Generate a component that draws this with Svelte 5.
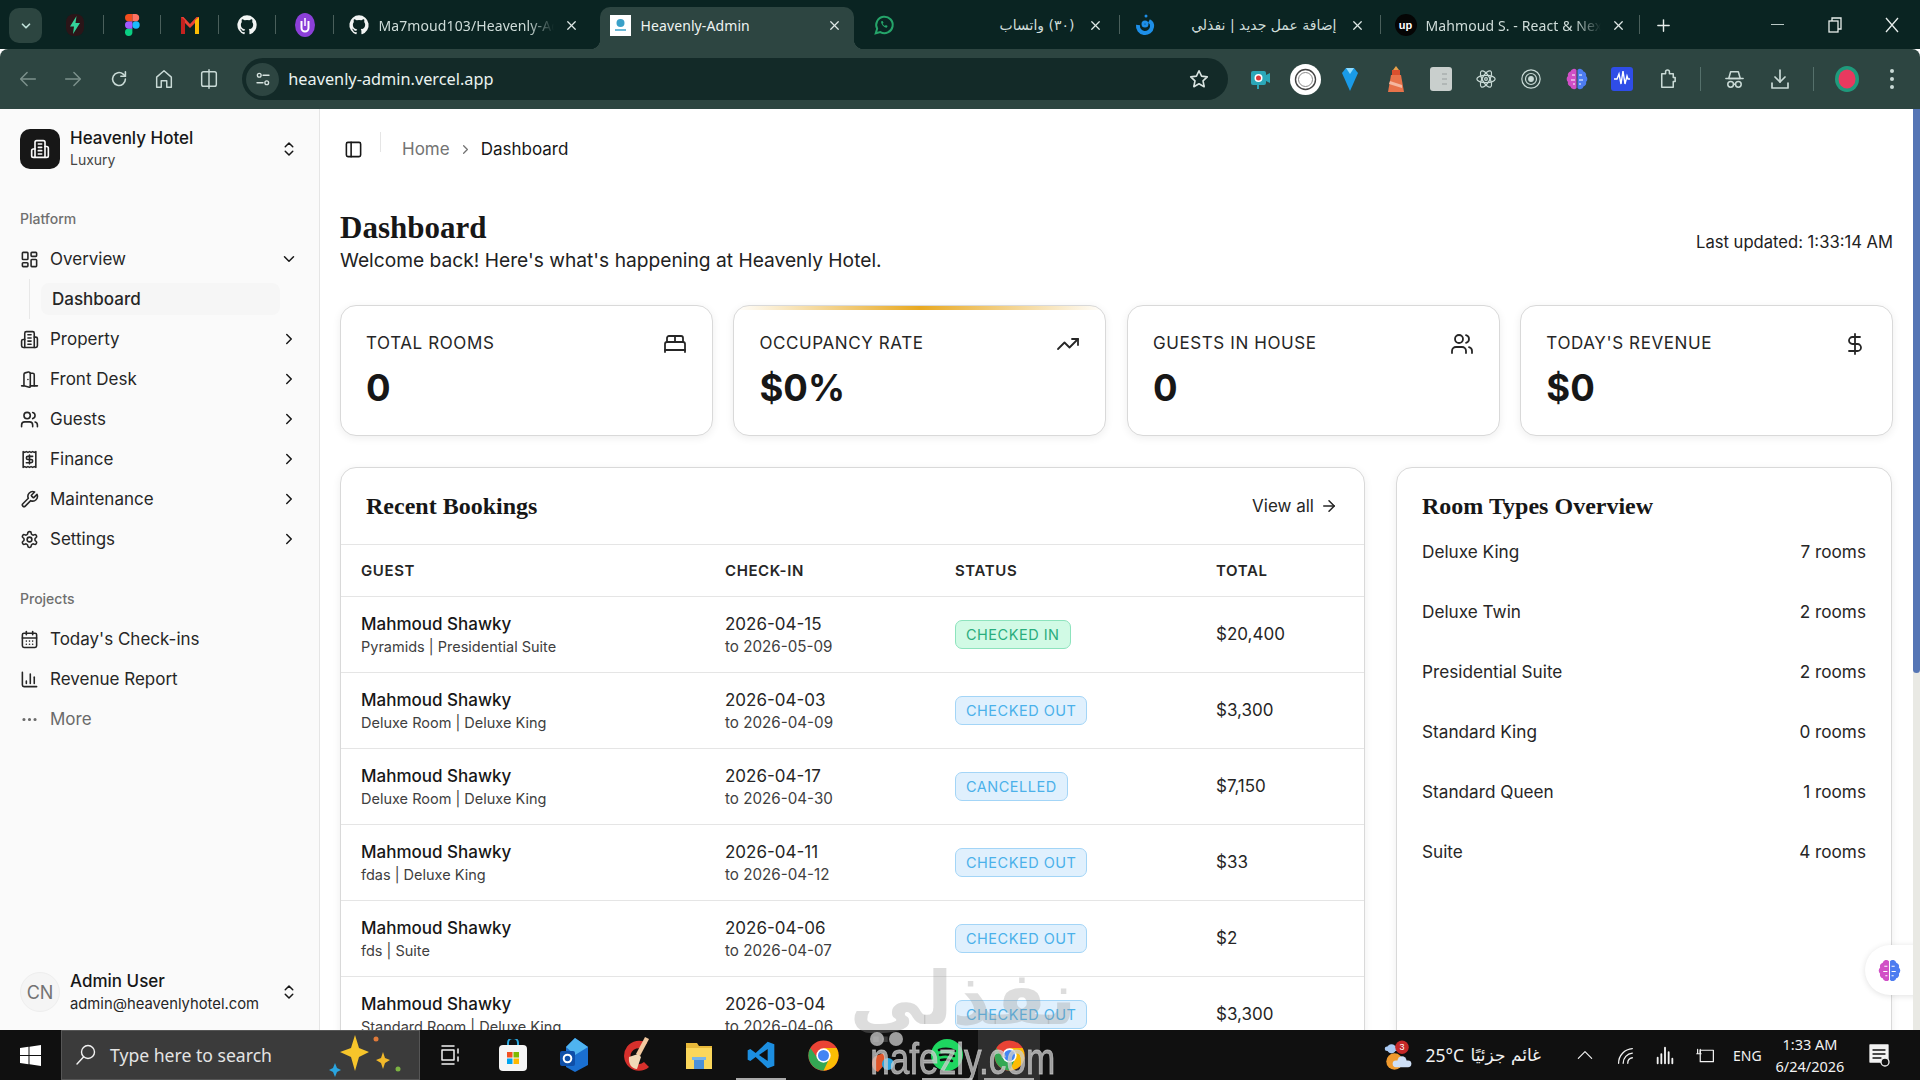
<script>
  const ic = {
    dash: '<rect width="7" height="9" x="3" y="3" rx="1"/><rect width="7" height="5" x="14" y="3" rx="1"/><rect width="7" height="9" x="14" y="12" rx="1"/><rect width="7" height="5" x="3" y="16" rx="1"/>',
    building: '<path d="M6 22V4a2 2 0 0 1 2-2h8a2 2 0 0 1 2 2v18Z"/><path d="M6 12H4a2 2 0 0 0-2 2v6a2 2 0 0 0 2 2h2"/><path d="M18 9h2a2 2 0 0 1 2 2v9a2 2 0 0 1-2 2h-2"/><path d="M10 6h4"/><path d="M10 10h4"/><path d="M10 14h4"/><path d="M10 18h4"/>',
    door: '<path d="M13 4h3a2 2 0 0 1 2 2v14"/><path d="M2 20h3"/><path d="M13 20h9"/><path d="M10 12v.01"/><path d="M13 4.562v16.157a1 1 0 0 1-1.242.97L5 20V5.562a2 2 0 0 1 1.515-1.94l4-1A2 2 0 0 1 13 4.561Z"/>',
    users: '<path d="M16 21v-2a4 4 0 0 0-4-4H6a4 4 0 0 0-4 4v2"/><circle cx="9" cy="7" r="4"/><path d="M22 21v-2a4 4 0 0 0-3-3.87"/><path d="M16 3.13a4 4 0 0 1 0 7.75"/>',
    receipt: '<path d="M4 2v20l2-1 2 1 2-1 2 1 2-1 2 1 2-1 2 1V2l-2 1-2-1-2 1-2-1-2 1-2-1-2 1Z"/><path d="M16 8h-6a2 2 0 1 0 0 4h4a2 2 0 1 1 0 4H8"/><path d="M12 17.5v-11"/>',
    wrench: '<path d="M14.7 6.3a1 1 0 0 0 0 1.4l1.6 1.6a1 1 0 0 0 1.4 0l3.77-3.77a6 6 0 0 1-7.94 7.94l-6.91 6.91a2.12 2.12 0 0 1-3-3l6.91-6.91a6 6 0 0 1 7.94-7.94l-3.76 3.76z"/>',
    gear: '<path d="M12.22 2h-.44a2 2 0 0 0-2 2v.18a2 2 0 0 1-1 1.73l-.43.25a2 2 0 0 1-2 0l-.15-.08a2 2 0 0 0-2.73.73l-.22.38a2 2 0 0 0 .73 2.73l.15.1a2 2 0 0 1 1 1.72v.51a2 2 0 0 1-1 1.74l-.15.09a2 2 0 0 0-.73 2.73l.22.38a2 2 0 0 0 2.73.73l.15-.08a2 2 0 0 1 2 0l.43.25a2 2 0 0 1 1 1.73V20a2 2 0 0 0 2 2h.44a2 2 0 0 0 2-2v-.18a2 2 0 0 1 1-1.73l.43-.25a2 2 0 0 1 2 0l.15.08a2 2 0 0 0 2.73-.73l.22-.39a2 2 0 0 0-.73-2.73l-.15-.08a2 2 0 0 1-1-1.74v-.5a2 2 0 0 1 1-1.74l.15-.09a2 2 0 0 0 .73-2.73l-.22-.38a2 2 0 0 0-2.73-.73l-.15.08a2 2 0 0 1-2 0l-.43-.25a2 2 0 0 1-1-1.73V4a2 2 0 0 0-2-2z"/><circle cx="12" cy="12" r="3"/>',
    cal: '<path d="M8 2v4"/><path d="M16 2v4"/><rect width="18" height="18" x="3" y="4" rx="2"/><path d="M3 10h18"/><path d="M8 14h.01"/><path d="M12 14h.01"/><path d="M16 14h.01"/><path d="M8 18h.01"/><path d="M12 18h.01"/><path d="M16 18h.01"/>',
    chart: '<path d="M3 3v16a2 2 0 0 0 2 2h16"/><path d="M18 17V9"/><path d="M13 17V5"/><path d="M8 17v-3"/>',
    dots: '<circle cx="12" cy="12" r="1"/><circle cx="19" cy="12" r="1"/><circle cx="5" cy="12" r="1"/>',
    bed: '<path d="M2 20v-8a2 2 0 0 1 2-2h16a2 2 0 0 1 2 2v8"/><path d="M4 10V6a2 2 0 0 1 2-2h12a2 2 0 0 1 2 2v4"/><path d="M12 4v6"/><path d="M2 18h20"/>',
    trend: '<polyline points="22 7 13.5 15.5 8.5 10.5 2 17"/><polyline points="16 7 22 7 22 13"/>',
    dollar: '<line x1="12" x2="12" y1="2" y2="22"/><path d="M17 5H9.5a3.5 3.5 0 0 0 0 7h5a3.5 3.5 0 0 1 0 7H6"/>',
    panel: '<rect width="18" height="18" x="3" y="3" rx="2"/><path d="M9 3v18"/>',
    updown: '<path d="m7 15 5 5 5-5"/><path d="m7 9 5-5 5 5"/>',
    right: '<path d="m9 18 6-6-6-6"/>',
    down: '<path d="m6 9 6 6 6-6"/>',
    arrow: '<path d="M5 12h14"/><path d="m12 5 7 7-7 7"/>',
    back: '<path d="M20 12H5"/><path d="m11 5-7 7 7 7"/>',
    fwd: '<path d="M4 12h15"/><path d="m13 5 7 7-7 7"/>',
    reload: '<path d="M19 12a7 7 0 1 1-2.4-5.3L19 9"/><path d="M19 4v5h-5"/>',
    home: '<path d="M4 21V10l8-7 8 7v11h-5v-7H9v7z"/>',
    split: '<rect x="4" y="4" width="16" height="16" rx="2"/><path d="M12 2v20"/>',
    star: '<path d="m12 3 2.8 5.9 6.2.8-4.6 4.3 1.2 6.4L12 17.2l-5.6 3.2 1.2-6.4L3 9.700l6.200-.8z"/>',
    puzzle: '<path d="M6 6h4V4a2 2 0 0 1 4 0v2h4v4h2v4h-2v6H6z"/>',
    incog: '<path d="M8 4h8l2 7H6z"/><path d="M3 11h18"/><circle cx="8" cy="17" r="3"/><circle cx="16" cy="17" r="3"/><path d="M11 17h2"/>',
    dl: '<path d="M12 3v12"/><path d="m7 10 5 5 5-5"/><path d="M4 16v5h16v-5"/>',
    close: '<path d="M6 6l12 12"/><path d="M18 6 6 18"/>',
    plus: '<path d="M12 4v16"/><path d="M4 12h16"/>',
    caret: '<path d="m4 16 8-8 8 8"/>',
    search: '<circle cx="14" cy="9" r="6.500"/><path d="M9.500 14 3 21"/>',
    atom: '<circle cx="12" cy="12" r="1.500"/><ellipse cx="12" cy="12" rx="10" ry="4"/><ellipse cx="12" cy="12" rx="10" ry="4" transform="rotate(60 12 12)"/><ellipse cx="12" cy="12" rx="10" ry="4" transform="rotate(120 12 12)"/>',
    rings: '<circle cx="12" cy="12" r="10"/><circle cx="12" cy="12" r="6"/><circle cx="12" cy="12" r="2.500" fill="currentColor"/>',
    tune: '<circle cx="7" cy="7" r="2.500"/><path d="M12 7h8"/><circle cx="17" cy="17" r="2.500"/><path d="M4 17h8"/>',
    bars: '<path d="M4 21v-6M8 21V11M12 21V4M16 21V9M20 21v-5"/>',
    wifi: '<path d="M5 21A16 16 0 0 1 20 5"/><path d="M10 21a11 11 0 0 1 10-11"/><path d="M15 21a6 6 0 0 1 5-6"/>',
    batt: '<rect x="6" y="6" width="15" height="13"/><path d="M3 5v5M6 5v5M2 10h5"/>',
    note: '<path d="M3 2h18v17H3z" fill="currentColor"/><path d="M6 7h12M6 11h12M6 15h8" stroke="#101010"/><circle cx="18" cy="19" r="4" fill="#101010"/>',
    taskview: '<path d="M4 3h12M4 21h12"/><rect x="4" y="7" width="12" height="10"/><path d="M20 6v4M20 14v4"/>'
  };

  const tabs = [
    { w: 266, pl: 14, pr: 16, title: 'Ma7moud103/Heavenly-Admin', icon: 'gh', fade: true },
    { w: 254, pl: 10, pr: 7, title: 'Heavenly-Admin', icon: 'fav', active: true },
    { w: 266, pl: 19, pr: 12, title: '(٣٠) واتساب', icon: 'wa', rtl: true, sep: true },
    { w: 261, pl: 14, pr: 11, title: 'إضافة عمل جديد | نفذلي', icon: 'nf', rtl: true, sep: true },
    { w: 259, pl: 14, pr: 9, title: 'Mahmoud S. - React & Next.js', icon: 'up', fade: true, sep: true }
  ];

  const platform = [
    { l: 'Overview', i: 'dash', open: true },
    { l: 'Property', i: 'building' },
    { l: 'Front Desk', i: 'door' },
    { l: 'Guests', i: 'users' },
    { l: 'Finance', i: 'receipt' },
    { l: 'Maintenance', i: 'wrench' },
    { l: 'Settings', i: 'gear' }
  ];

  const stats = [
    { l: 'Total Rooms', v: '0', i: 'bed' },
    { l: 'Occupancy Rate', v: '$0%', i: 'trend', accent: true },
    { l: 'Guests in House', v: '0', i: 'users' },
    { l: "Today's Revenue", v: '$0', i: 'dollar' }
  ];

  const rows = [
    { sub: 'Pyramids | Presidential Suite', a: '2026-04-15', b: '2026-05-09', s: 'Checked In', c: 'green', t: '$20,400' },
    { sub: 'Deluxe Room | Deluxe King', a: '2026-04-03', b: '2026-04-09', s: 'Checked Out', c: 'blue', t: '$3,300' },
    { sub: 'Deluxe Room | Deluxe King', a: '2026-04-17', b: '2026-04-30', s: 'Cancelled', c: 'blue', t: '$7,150' },
    { sub: 'fdas | Deluxe King', a: '2026-04-11', b: '2026-04-12', s: 'Checked Out', c: 'blue', t: '$33' },
    { sub: 'fds | Suite', a: '2026-04-06', b: '2026-04-07', s: 'Checked Out', c: 'blue', t: '$2' },
    { sub: 'Standard Room | Deluxe King', a: '2026-03-04', b: '2026-04-06', s: 'Checked Out', c: 'blue', t: '$3,300' }
  ];

  const roomTypes = [
    ['Deluxe King', '7 rooms'], ['Deluxe Twin', '2 rooms'], ['Presidential Suite', '2 rooms'],
    ['Standard King', '0 rooms'], ['Standard Queen', '1 rooms'], ['Suite', '4 rooms']
  ];
</script>

{#snippet i(name, size = 18, sw = 2)}
  <svg class="i" width={size} height={size} viewBox="0 0 24 24" fill="none" stroke="currentColor" stroke-width={sw} stroke-linecap="round" stroke-linejoin="round">{@html ic[name]}</svg>
{/snippet}

{#snippet github(size)}
  <svg width={size} height={size} viewBox="0 0 24 24" fill="#f2f5f4"><path d="M12 1.500a10.500 10.500 0 0 0-3.300 20.470c.52.100.72-.230.720-.500v-1.800c-2.920.630-3.540-1.410-3.540-1.410-.480-1.210-1.170-1.540-1.170-1.540-.950-.650.070-.640.070-.640 1.050.070 1.600 1.080 1.600 1.080.940 1.600 2.450 1.140 3.050.870.100-.680.370-1.140.670-1.400-2.330-.260-4.780-1.160-4.780-5.180 0-1.140.410-2.080 1.080-2.810-.110-.270-.470-1.340.100-2.780 0 0 .880-.280 2.890 1.070a10 10 0 0 1 5.260 0c2-1.350 2.880-1.070 2.880-1.070.570 1.440.210 2.510.100 2.780.670.730 1.080 1.670 1.080 2.810 0 4.030-2.460 4.920-4.800 5.170.380.330.710.970.710 1.950v2.890c0 .280.190.610.720.500A10.500 10.500 0 0 0 12 1.500z"/></svg>
{/snippet}

{#snippet chrome(size)}
  <svg width={size} height={size} viewBox="0 0 24 24"><circle cx="12" cy="12" r="11" fill="#ea4335"/><path d="M2.500 6.500A11 11 0 0 0 12 23l5-8.500H8z" fill="#34a853"/><path d="M12 23a11 11 0 0 0 9.500-16.500H12l4 8z" fill="#fbbc04"/><circle cx="12" cy="12" r="5.200" fill="#fff"/><circle cx="12" cy="12" r="4" fill="#4285f4"/></svg>
{/snippet}

{#snippet brain(size)}
  <svg width={size} height={size} viewBox="0 0 24 24"><path d="M11.500 3a3.500 3.500 0 0 0-6 1.500A3.500 3.500 0 0 0 3 9a4 4 0 0 0 0 6 3.500 3.500 0 0 0 2.500 4.500 3.500 3.500 0 0 0 6 1.500z" fill="#d14fc6"/><path d="M12.500 3a3.500 3.500 0 0 1 6 1.500A3.500 3.500 0 0 1 21 9a4 4 0 0 1 0 6 3.500 3.500 0 0 1-2.500 4.500 3.500 3.500 0 0 1-6 1.500z" fill="#4d7cf0"/><path d="M7 8h3M6 13h4M8 17h2M14 8h3M14 13h4M14 17h2" stroke="#fff" stroke-width="1"/></svg>
{/snippet}

<div class="screen">
  <header class="tabstrip">
    <button class="tabsearch">{@render i('down', 14, 3)}</button>
    <div class="pinned">
      <span class="pin"><svg width="20" height="24" viewBox="0 0 20 24"><rect x="1" y="1" width="18" height="22" rx="8" fill="#2a1518"/><path d="M11.500 3 5 13.500h4L8 21l7-11h-4.500z" fill="#34d399"/></svg></span>
      <span class="pin"><svg width="15" height="22" viewBox="0 0 15 22"><circle cx="11" cy="11" r="3.700" fill="#1abcfe"/><path d="M3.700 22a3.700 3.700 0 0 0 3.700-3.700v-3.700H3.700a3.700 3.700 0 0 0 0 7.400z" fill="#0acf83"/><path d="M0 11a3.700 3.700 0 0 1 3.700-3.700h3.700v7.400H3.700A3.700 3.700 0 0 1 0 11z" fill="#a259ff"/><path d="M0 3.700A3.700 3.700 0 0 1 3.700 0h3.700v7.300H3.700A3.700 3.700 0 0 1 0 3.700z" fill="#f24e1e"/><path d="M7.400 0h3.700a3.700 3.700 0 0 1 0 7.300H7.400z" fill="#ff7262"/></svg></span>
      <span class="pin"><svg width="22" height="22" viewBox="0 0 22 22"><path d="M2 20V3h2.500L11 10l6.500-7H20v17h-4V9l-5 5-5-5v11z" fill="#ea4335"/><path d="M2 20V3l4 3.500V20z" fill="#c5221f"/><path d="M16 20V6.500L20 3v17z" fill="#fbbc04"/></svg></span>
      <span class="pin">{@render github(22)}</span>
      <span class="pin"><svg width="20" height="24" viewBox="0 0 20 24"><ellipse cx="10" cy="12" rx="10" ry="12" fill="#8b3fd9"/><path d="M6.500 8v7a3.500 3.500 0 0 0 7 0V8" fill="none" stroke="#fff" stroke-width="2"/><path d="M10 5v8" stroke="#fff" stroke-width="1.500"/></svg></span>
    </div>
    {#each tabs as t}
      <div class="tab" class:active={t.active} class:sep={t.sep} style="width:{t.w}px;padding-left:{t.pl}px;padding-right:{t.pr}px">
        <span class="favicon">
          {#if t.icon === 'gh'}{@render github(22)}
          {:else if t.icon === 'fav'}<svg width="21" height="21" viewBox="0 0 21 21"><rect width="21" height="21" fill="#fff"/><circle cx="10.500" cy="8" r="4" fill="#3aa0c8"/><path d="M5 15h11" stroke="#3aa0c8" stroke-width="1.500"/></svg>
          {:else if t.icon === 'wa'}<svg width="22" height="22" viewBox="0 0 24 24" fill="none" stroke="#25a56a" stroke-width="2.200"><path d="M3 21l1.500-5A9 9 0 1 1 8 19.700z"/><path d="M9 8c-1 2 2.500 7 6 7l1-2-2-1-1 1c-1-.500-2-1.500-2.500-2.500l1-1-1-2z" fill="#25a56a" stroke="none"/></svg>
          {:else if t.icon === 'nf'}<svg width="22" height="24" viewBox="0 0 22 24" fill="none" stroke="#1d8fe8" stroke-width="4"><path d="M4 12a7 7 0 0 0 14 2c.500-3-1-5-3-6"/><circle cx="11" cy="11" r="1.500"/><circle cx="12" cy="3" r="1.500" fill="#1d8fe8" stroke="none"/></svg>
          {:else}<span class="upfav">up</span>{/if}
        </span>
        <span class="ttl" class:rtl={t.rtl} class:fade={t.fade}>{t.title}</span>
        <span class="x">{@render i('close', 15, 2)}</span>
      </div>
    {/each}
    <span class="newtab">{@render i('plus', 17, 2)}</span>
    <div class="winctl">
      <span class="wmin"></span>
      <span class="wres"><svg width="14" height="16" viewBox="0 0 14 16" fill="none" stroke="#e8eeec" stroke-width="1.300"><rect x="1" y="4" width="9" height="11"/><path d="M4 4V1h9v11h-3"/></svg></span>
      <span class="wclose"><svg width="16" height="16" viewBox="0 0 16 16" fill="none" stroke="#e8eeec" stroke-width="1.300"><path d="M2 1l12 14M14 1 2 15"/></svg></span>
    </div>
  </header>

  <div class="toolbar">
    <span class="tb dim">{@render i('back', 22, 1.600)}</span>
    <span class="tb dim">{@render i('fwd', 22, 1.600)}</span>
    <span class="tb">{@render i('reload', 22, 1.700)}</span>
    <span class="tb">{@render i('home', 22, 1.600)}</span>
    <span class="tb">{@render i('split', 22, 1.600)}</span>
    <div class="omni">
      <span class="tune">{@render i('tune', 18, 1.800)}</span>
      <span class="url">heavenly-admin.vercel.app</span>
      <span class="omnistar">{@render i('star', 22, 1.800)}</span>
    </div>
    <div class="exts">
      <span class="ext"><svg width="20" height="24" viewBox="0 0 20 24"><rect x="1" y="4" width="15" height="14" rx="2" fill="#2ba7b8"/><path d="M16 8l4-2v10l-4-2z" fill="#2ba7b8"/><circle cx="8.500" cy="11" r="4" fill="#fff"/><circle cx="8.500" cy="11" r="2.500" fill="#d93a3a"/><path d="M8 18v4" stroke="#2ba7b8" stroke-width="2"/></svg></span>
      <span class="ext"><svg width="31" height="31" viewBox="0 0 31 31" fill="none"><circle cx="15.500" cy="15.500" r="15.500" fill="#fff"/><circle cx="15.500" cy="15.500" r="10" stroke="#444" stroke-width="1.400"/><circle cx="15.500" cy="15.500" r="7" stroke="#888"/></svg></span>
      <span class="ext"><svg width="16" height="24" viewBox="0 0 16 24"><path d="M0 6 4 1h8l4 5-8 18z" fill="#1a9be8"/><path d="M4 1h8l-4 6z" fill="#8fdcff"/></svg></span>
      <span class="ext"><svg width="16" height="26" viewBox="0 0 16 26"><path d="M3 9h10l3 17H0z" fill="#e8734a"/><path d="M4 4h8v5H4z" fill="#d9502e"/><path d="M8 0l3 4H5z" fill="#e8a04a"/><path d="M2 15l12 4v3L1 18z" fill="#f5b79f"/></svg></span>
      <span class="ext"><svg width="22" height="24" viewBox="0 0 22 24"><rect width="22" height="24" rx="3" fill="#c9cfcd"/><path d="M12 7h5M12 12h5M12 17h5" stroke="#a9b0ae" stroke-width="1.300"/></svg></span>
      <span class="ext light">{@render i('atom', 22, 1.300)}</span>
      <span class="ext light">{@render i('rings', 22, 1.300)}</span>
      <span class="ext">{@render brain(24)}</span>
      <span class="ext"><svg width="22" height="24" viewBox="0 0 22 24"><rect width="22" height="24" rx="3" fill="#2f4de8"/><path d="M3 12h3l2-5 2 10 2-13 2 13 2-8 1 3h2" fill="none" stroke="#fff" stroke-width="1.400"/></svg></span>
      <span class="ext light">{@render i('puzzle', 23, 1.600)}</span>
      <span class="tsep"></span>
      <span class="ext light">{@render i('incog', 23, 1.600)}</span>
      <span class="ext light">{@render i('dl', 24, 1.700)}</span>
      <span class="tsep"></span>
      <span class="ext"><svg width="24" height="26" viewBox="0 0 24 26"><ellipse cx="12" cy="13" rx="12" ry="13" fill="#1f9a7c"/><ellipse cx="12" cy="13" rx="8.500" ry="9.500" fill="#e9395f"/></svg></span>
      <span class="ext kebab"><i></i><i></i><i></i></span>
    </div>
  </div>

  <div class="page">
    <aside class="side">
      <div class="brandrow">
        <span class="logo">{@render i('building', 20, 2)}</span>
        <div class="brandtext up2"><strong>Heavenly Hotel</strong><small>Luxury</small></div>
        <span class="chev">{@render i('updown', 18, 2)}</span>
      </div>

      <div class="grouplabel first">Platform</div>
      {#each platform as n}
        <div class="nav">
          <span class="nicon">{@render i(n.i, 19, 2)}</span>
          <span class="nlabel">{n.l}</span>
          <span class="chev">{@render i(n.open ? 'down' : 'right', 18, 2)}</span>
        </div>
        {#if n.open}
          <div class="subwrap"><div class="subitem">Dashboard</div></div>
        {/if}
      {/each}

      <div class="grouplabel">Projects</div>
      <div class="nav"><span class="nicon">{@render i('cal', 19, 2)}</span><span class="nlabel">Today's Check-ins</span></div>
      <div class="nav"><span class="nicon">{@render i('chart', 19, 2)}</span><span class="nlabel">Revenue Report</span></div>
      <div class="nav more"><span class="nicon">{@render i('dots', 19, 2)}</span><span class="nlabel">More</span></div>

      <div class="userrow">
        <span class="avatar">CN</span>
        <div class="brandtext"><strong>Admin User</strong><small class="dark">admin@heavenlyhotel.com</small></div>
        <span class="chev">{@render i('updown', 18, 2)}</span>
      </div>
    </aside>

    <main class="main">
      <div class="crumbs">
        <span class="trigger">{@render i('panel', 19, 2)}</span>
        <span class="vsep"></span>
        <span class="home">Home</span>
        <span class="crchev">{@render i('right', 15, 2)}</span>
        <span class="cur">Dashboard</span>
      </div>

      <div class="heading">
        <div>
          <h1>Dashboard</h1>
          <p>Welcome back! Here's what's happening at Heavenly Hotel.</p>
        </div>
        <span class="updated">Last updated: 1:33:14 AM</span>
      </div>

      <section class="stats">
        {#each stats as s}
          <article class="stat" class:accent={s.accent}>
            <div class="stattop"><span class="statlabel">{s.l}</span><span class="staticon">{@render i(s.i, 24, 1.800)}</span></div>
            <div class="statval">{s.v}</div>
          </article>
        {/each}
      </section>

      <section class="lower">
        <div class="card bookings">
          <div class="bhead">
            <h2>Recent Bookings</h2>
            <span class="viewall">View all {@render i('arrow', 18, 2)}</span>
          </div>
          <table>
            <colgroup><col class="c1" /><col class="c2" /><col class="c3" /><col /></colgroup>
            <thead><tr><th>Guest</th><th>Check-in</th><th>Status</th><th>Total</th></tr></thead>
            <tbody>
              {#each rows as r}
                <tr>
                  <td><div class="l1">Mahmoud Shawky</div><div class="l2">{r.sub}</div></td>
                  <td><div class="l1 light">{r.a}</div><div class="l2 date">to {r.b}</div></td>
                  <td><span class="badge {r.c}">{r.s}</span></td>
                  <td class="total">{r.t}</td>
                </tr>
              {/each}
            </tbody>
          </table>
        </div>

        <div class="card roomcard">
          <h2>Room Types Overview</h2>
          <div class="rtlist">
            {#each roomTypes as rt}
              <div class="rt"><span>{rt[0]}</span><span>{rt[1]}</span></div>
            {/each}
          </div>
        </div>
      </section>

      <button class="float">{@render brain(25)}</button>
    </main>
    <div class="scrollbar"><div class="thumb"></div></div>
  </div>

  <footer class="taskbar">
    <span class="winlogo"><svg width="21" height="21" viewBox="0 0 21 21" fill="#fff"><path d="M0 3l8.500-1.200V10H0zM9.500 1.700 21 0v10H9.500zM0 11h8.500v8.200L0 18zM9.500 11H21v10L9.500 19.300z"/></svg></span>
    <div class="tsearch">
      <span class="tsi">{@render i('search', 24, 1.400)}</span>
      <span class="tst">Type here to search</span>
      <svg class="spark" width="74" height="44" viewBox="0 0 74 44"><path d="M27 2l4 13 10 4-10 5-4 14-4-14-11-5 11-4z" fill="#f7c52b"/><path d="M55 19l2 6 5 2-5 3-2 6-2-6-5-3 5-2z" fill="#f2b92a"/><circle cx="48" cy="6" r="2.500" fill="#e07a3a"/><circle cx="70" cy="36" r="2.500" fill="#7cb342"/><path d="M7 30l2 5 4 2-4 2-2 5-2-5-4-2 4-2z" fill="#2aa5e0"/></svg>
    </div>
    <span class="taskview">{@render i('taskview', 24, 1.500)}</span>
    <div class="apps">
      <span class="app"><svg width="28" height="32" viewBox="0 0 28 32"><path d="M9 7V4a5 5 0 0 1 10 0v3" fill="none" stroke="#29a8e0" stroke-width="2"/><rect y="6" width="28" height="26" rx="4" fill="#f5f5f5"/><rect x="8" y="13" width="5.500" height="5.500" fill="#f25022"/><rect x="14.500" y="13" width="5.500" height="5.500" fill="#7fba00"/><rect x="8" y="19.500" width="5.500" height="5.500" fill="#00a4ef"/><rect x="14.500" y="19.500" width="5.500" height="5.500" fill="#ffb900"/></svg></span>
      <span class="app"><svg width="30" height="34" viewBox="0 0 30 34"><path d="M15 0l13 9v18l-13 7-9-5V9z" fill="#1a6fd0"/><path d="M15 0l13 9-13 8-9-8z" fill="#4fb4f0"/><rect x="0" y="13" width="15" height="15" rx="2" fill="#0f4fa8"/><circle cx="7.500" cy="20.500" r="3.800" fill="none" stroke="#fff" stroke-width="2"/></svg></span>
      <span class="app"><svg width="32" height="36" viewBox="0 0 32 36"><path d="M26 6A15 15 0 1 0 28 30l-5-5a8 8 0 1 1-2-13z" fill="#d6302c"/><path d="M24 0l4 2-9 17-4-2z" fill="#f2c9a0"/><path d="M8 20l9-3 3 3-4 12c-5 0-9-5-8-12z" fill="#f0d9b8"/></svg></span>
      <span class="app"><svg width="30" height="30" viewBox="0 0 30 30"><path d="M2 3h11l2 3h13v6H2z" fill="#e8b93a"/><rect x="2" y="8" width="26" height="21" fill="#fbd75b"/><path d="M10 29v-9h10v9" fill="#4a90d9"/><rect x="8" y="17" width="14" height="3" fill="#7ab6e8"/></svg></span>
      <span class="app open"><svg width="32" height="36" viewBox="0 0 24 24"><path d="M17 2 8 10.500 4 7.500 2 8.500v7l2 1 4-3 9 8.500 5-2V4z" fill="#1c8ee0"/><path d="M17 7.500 10.500 12l6.500 4.500z" fill="#101010"/></svg></span>
      <span class="app">{@render chrome(33)}</span>
      <span class="app"><svg width="26" height="34" viewBox="0 0 26 34"><path d="M6 34a9 9 0 0 1 0-17l6-2 2 10z" fill="#e0562a"/><circle cx="16" cy="26" r="6" fill="#2aa5e0"/></svg></span>
      <span class="app open"><svg width="32" height="32" viewBox="0 0 32 32"><circle cx="16" cy="16" r="16" fill="#1ed760"/><path d="M8 11c6-2 11-1.500 16 1M9 16c5-1.500 9-1 14 1M10 21c4-1 7-.700 11 1" fill="none" stroke="#101010" stroke-width="2.500" stroke-linecap="round"/></svg></span>
      <span class="app open act">{@render chrome(33)}</span>
    </div>
    <div class="tray">
      <span class="wx"><svg width="30" height="33" viewBox="0 0 40 44"><circle cx="14" cy="30" r="11" fill="#f09a2e"/><circle cx="10" cy="13" r="6" fill="#a9c9f2"/><path d="M4 13h14" stroke="#a9c9f2" stroke-width="6" stroke-linecap="round"/><path d="M16 33h16" stroke="#cfe0f7" stroke-width="9" stroke-linecap="round"/><circle cx="24" cy="29" r="6" fill="#cfe0f7"/><circle cx="24" cy="11" r="9" fill="#c62828"/><text x="24" y="15" text-anchor="middle" font-size="12" fill="#fff" font-family="Liberation Sans">3</text></svg></span>
      <span class="temp">25°C</span>
      <span class="wxt">غائم جزئيًا</span>
      <span class="ti up">{@render i('caret', 20, 1.400)}</span>
      <span class="ti">{@render i('wifi', 22, 1.400)}</span>
      <span class="ti">{@render i('bars', 22, 2)}</span>
      <span class="ti">{@render i('batt', 21, 1.400)}</span>
      <span class="eng">ENG</span>
      <span class="clock"><span>1:33 AM</span><span>6/24/2026</span></span>
      <span class="ti notif">{@render i('note', 24, 1.300)}</span>
    </div>
  </footer>

  <div class="wm">
    <span class="wm-ar">نفذلي</span>
    <span class="wm-en">nafezly.com</span>
    <span class="wm-dot d1"></span>
    <span class="wm-dot d2"></span>
  </div>
</div>

<style>
  :global(body) { margin: 0; background: #fff; overflow: hidden; }
  * { box-sizing: border-box; }
  .screen { position: relative; width: 1920px; height: 1080px; display: flex; flex-direction: column; overflow: hidden; font-family: Inter, "Noto Sans", sans-serif; color: #171717; }
  .i { display: block; flex: none; }

  .tabstrip { height: 49px; flex: none; background: #0a2422; display: flex; align-items: flex-end; padding-left: 9px; color: #d8e4e1; font-family: "Noto Sans", "DejaVu Sans", sans-serif; }
  .tabsearch { width: 33px; height: 35px; margin-bottom: 6px; border: 0; border-radius: 10px; background: #2c4540; color: #bfe0d8; display: flex; align-items: center; justify-content: center; padding: 0; }
  .pinned { display: flex; margin-left: 4px; }
  .pin { width: 57.500px; height: 42px; padding-bottom: 6px; display: flex; align-items: center; justify-content: center; position: relative; }
  .pin::after { content: ""; position: absolute; right: 0; top: 8px; height: 19px; width: 1px; background: #4a5f5b; }
  .tab { height: 42px; padding-bottom: 6px; display: flex; align-items: center; position: relative; flex: none; }
  .tab.sep::after { content: ""; position: absolute; right: 0; top: 8px; height: 19px; width: 1px; background: #4a5f5b; }
  .tab.active { background: #2d4541; border-radius: 10px 10px 0 0; color: #e8f0ee; }
  .tab.active::before, .tab.active::after { content: ""; position: absolute; bottom: 0; width: 10px; height: 10px; background: radial-gradient(circle at 0 0, transparent 10px, #2d4541 10.500px); }
  .tab.active::before { left: -10px; }
  .tab.active::after { right: -10px; background: radial-gradient(circle at 100% 0, transparent 10px, #2d4541 10.500px); }
  .favicon { flex: none; display: flex; width: 22px; justify-content: center; }
  .upfav { width: 22px; height: 22px; background: #050505; border-radius: 50%; color: #fff; font: 700 11px/22px "Liberation Sans", sans-serif; text-align: center; }
  .ttl { flex: 1; min-width: 0; margin-left: 9px; white-space: nowrap; overflow: hidden; font-size: 14px; letter-spacing: .1px; color: #cfdcd9; }
  .active .ttl { color: #eef4f2; }
  .ttl.rtl { direction: rtl; text-align: right; font-family: "DejaVu Sans", sans-serif; font-size: 14px; margin-left: 20px; margin-right: 9px; }
  .ttl.fade { margin-right: 6px; -webkit-mask-image: linear-gradient(90deg, #000 85%, transparent); mask-image: linear-gradient(90deg, #000 85%, transparent); }
  .x { width: 24px; height: 24px; display: flex; align-items: center; justify-content: center; flex: none; color: #dfe8e6; }
  .newtab { margin-left: 15px; margin-bottom: 9px; height: 30px; display: flex; align-items: center; color: #e8eeec; }
  .winctl { margin-left: auto; display: flex; height: 49px; align-items: center; }
  .winctl span { width: 57px; display: flex; justify-content: center; }
  .wmin::before { content: ""; width: 13px; height: 1.500px; background: #b9c8c5; }

  .toolbar { height: 60px; flex: none; background: #2d4541; display: flex; align-items: center; padding-left: 17px; color: #c9dad6; border-radius: 8px 8px 0 0; }
  .tb { width: 45.250px; flex: none; display: flex; justify-content: flex-start; }
  .tb.dim { color: #7c918c; }
  .omni { flex: none; margin-left: -1px; width: 986px; height: 42px; border-radius: 21px; background: #132a28; display: flex; align-items: center; padding: 0 18px 0 4px; }
  .tune { width: 33px; height: 33px; border-radius: 50%; background: #2d4541; display: flex; align-items: center; justify-content: center; color: #d7e3e0; }
  .url { margin-left: 9px; font: 16.300px "Noto Sans", sans-serif; color: #eaf2f0; flex: 1; }
  .omnistar { color: #d9e4e1; }
  .exts { display: flex; align-items: center; margin-left: 9px; flex: none; }
  .ext { width: 45.250px; flex: none; display: flex; justify-content: center; align-items: center; }
  .ext.light { color: #c9dad6; }
  .tsep { width: 1px; height: 24px; background: #55706b; margin: 0 10.500px; flex: none; }
  .kebab { flex-direction: column; gap: 4px; }
  .kebab i { width: 4px; height: 4px; background: #c9dad6; border-radius: 50%; }

  .page { flex: 1; min-height: 0; display: flex; }
  .side { width: 320px; flex: none; background: #fafafa; border-right: 1px solid #e5e5e5; padding: 20px 0 0 20px; display: flex; flex-direction: column; position: relative; }
  .brandrow { display: flex; align-items: center; height: 40px; padding-right: 21px; }
  .logo { width: 40px; height: 40px; border-radius: 10px; background: #171717; color: #fafafa; display: flex; align-items: center; justify-content: center; flex: none; }
  .brandtext { margin-left: 10px; flex: 1; display: flex; flex-direction: column; min-width: 0; }
  .brandtext.up2 { padding-bottom: 2px; }
  .brandtext strong { font-weight: 500; font-size: 17px; line-height: 23px; color: #171717; }
  .brandtext small { font-size: 14px; line-height: 20px; color: #444; }
  .brandtext small.dark { color: #262626; font-size: 14.800px; line-height: 22px; }
  .chev { flex: none; display: flex; width: 18px; color: #171717; }
  .grouplabel { font-size: 14px; color: #6f6f6f; line-height: 20px; height: 20px; margin-top: 30px; font-weight: 500; }
  .grouplabel.first { margin-top: 40px; }
  .nav { height: 40px; display: flex; align-items: center; padding-right: 21px; color: #262626; font-size: 17px; }
  .grouplabel + .nav { margin-top: 10px; }
  .nicon { width: 30px; flex: none; display: flex; }
  .nlabel { flex: 1; }
  .more { color: #6a6a6a; }
  .subwrap { height: 40px; margin-left: 9px; border-left: 1px solid #e8e8e8; padding: 4px 0 4px 11px; margin-right: 39px; }
  .subitem { height: 32px; line-height: 32px; padding-left: 11px; background: #f6f6f6; border-radius: 8px; font-size: 17px; font-weight: 500; color: #262626; width: 100%; }
  .userrow { position: absolute; left: 20px; right: 21px; top: 863px; display: flex; align-items: center; height: 40px; }
  .avatar { width: 40px; height: 40px; border-radius: 50%; background: #f5f5f5; border: 1px solid #eee; display: flex; align-items: center; justify-content: center; color: #737373; font-size: 18px; flex: none; }

  .main { flex: 1; min-width: 0; padding: 0 20px; overflow: hidden; position: relative; }
  .crumbs { height: 80px; display: flex; align-items: center; font-size: 17px; }
  .trigger { width: 40px; padding-left: 4px; display: flex; }
  .vsep { width: 1px; height: 20px; background: #e5e5e5; margin-top: -14px; }
  .home { margin-left: 21px; color: #737373; }
  .crchev { margin: 0 8px; color: #737373; }
  .cur { color: #171717; }
  .heading { display: flex; justify-content: space-between; align-items: center; margin-top: 19px; height: 64px; }
  h1 { margin: 0; font: 700 31px/40px "Liberation Serif", serif; color: #171717; }
  .heading p { margin: 0; font-size: 19.200px; line-height: 24px; color: #222; }
  .updated { font-size: 16.600px; margin-top: 4px; color: #222; }

  .stats { display: grid; grid-template-columns: repeat(4, 1fr); gap: 20.800px; margin-top: 33px; }
  .stat { height: 131px; background: #fff; border: 1px solid #d9d9d9; border-radius: 16px; box-shadow: 0 2px 8px rgba(0,0,0,.07); padding: 26px 25px 0; position: relative; overflow: hidden; }
  .accent::before { content: ""; position: absolute; top: 0; left: 0; right: 0; height: 4px; background: linear-gradient(90deg, transparent, #e8a820 50%, transparent); }
  .stattop { display: flex; justify-content: space-between; align-items: center; height: 22px; }
  .statlabel { text-transform: uppercase; font-size: 17px; letter-spacing: .6px; color: #262626; }
  .statval { font-size: 36.500px; font-weight: 700; line-height: 48px; margin-top: 10px; color: #171717; }
  .staticon { display: flex; color: #262626; margin-top: 2px; }

  .lower { display: grid; grid-template-columns: 1025px 496px; gap: 31px; margin-top: 31px; }
  .card { background: #fff; border: 1px solid #d9d9d9; border-radius: 16px 16px 0 0; box-shadow: 0 2px 8px rgba(0,0,0,.07); height: 640px; overflow: hidden; }
  .bhead { height: 77px; display: flex; align-items: center; justify-content: space-between; padding: 0 26px 0 25px; border-bottom: 1px solid #e5e5e5; }
  h2 { margin: 0; font: 700 24px/38px "Liberation Serif", serif; color: #171717; }
  .viewall { display: flex; align-items: center; gap: 6px; font-size: 17px; color: #262626; }
  table { width: 100%; border-collapse: collapse; table-layout: fixed; }
  .c1 { width: 364px; } .c2 { width: 230px; } .c3 { width: 261px; }
  th { height: 51px; text-align: left; font-size: 15px; font-weight: 600; text-transform: uppercase; letter-spacing: .6px; padding: 0 0 0 20px; border-bottom: 1px solid #e5e5e5; color: #262626; }
  td { height: 76px; padding: 0 0 0 20px; border-bottom: 1px solid #e5e5e5; vertical-align: middle; font-size: 17px; }
  .l1 { font-size: 17px; line-height: 25px; margin: 2px 0 -2px; color: #171717; font-weight: 500; }
  .l1.light { font-weight: 400; color: #262626; }
  .l2 { font-size: 14.500px; line-height: 23px; color: #404040; }
  .l2.date { font-size: 15.200px; }
  .total { color: #262626; }
  .badge { display: inline-flex; align-items: center; height: 29px; padding: 0 10px; border-radius: 7px; border: 1px solid; font-size: 14.500px; letter-spacing: .5px; text-transform: uppercase; }
  .green { background: #d1fae5; border-color: #8de3bd; color: #2aad7d; }
  .blue { background: #e0f0fd; border-color: #a3d5f7; color: #4bb1ea; }

  .roomcard { padding: 19px 25px 0; }
  .rtlist { margin-top: 15px; display: flex; flex-direction: column; gap: 36px; }
  .rt { display: flex; justify-content: space-between; font-size: 17.200px; line-height: 24px; color: #262626; }

  .float { position: absolute; right: -8px; top: 836px; width: 56px; height: 50px; border: 0; border-radius: 25px 0 0 25px; background: #fff; box-shadow: 0 1px 6px rgba(0,0,0,.12); display: flex; align-items: center; justify-content: center; padding: 0 8px 0 0; }

  .scrollbar { width: 7px; flex: none; background: #e9e9e4; }
  .thumb { height: 564px; background: #5575b5; border-radius: 0 0 4px 4px; }

  .taskbar { height: 50px; flex: none; background: #101010; display: flex; align-items: center; color: #f2f2f2; font-family: "Noto Sans", "DejaVu Sans", sans-serif; }
  .winlogo { width: 61px; display: flex; justify-content: center; }
  .tsearch { width: 359px; height: 50px; background: #3b3b3b; border: 1px solid #565656; display: flex; align-items: center; position: relative; padding-left: 12px; }
  .tst { margin-left: 12px; font-size: 17.600px; color: #e4e4e4; }
  .spark { position: absolute; left: 266px; top: 2px; }
  .taskview { width: 60px; display: flex; justify-content: center; }
  .apps { display: flex; margin-left: 2px; }
  .app { width: 62px; height: 50px; display: flex; align-items: center; justify-content: center; position: relative; }
  .app.open::after { content: ""; position: absolute; left: 6px; right: 6px; bottom: 0; height: 2px; background: #aaa; }
  .app.act { background: #2e2e2e; }
  .tray { margin-left: auto; display: flex; align-items: center; }
  .wx { width: 40px; display: flex; justify-content: flex-end; }
  .temp { font-size: 17.500px; margin-left: 11px; }
  .wxt { font: 17px "DejaVu Sans", sans-serif; margin-left: 7px; width: 70px; direction: rtl; white-space: nowrap; }
  .ti { width: 40px; display: flex; justify-content: center; }
  .up { margin-left: 24px; }
  .eng { font-size: 14px; margin-left: 8px; width: 27px; white-space: nowrap; flex: none; }
  .clock { display: flex; flex-direction: column; align-items: center; width: 100px; font-size: 14.500px; line-height: 22px; flex: none; }
  .notif { width: 60px; padding-right: 22px; }

  .wm { position: absolute; left: 845px; top: 958px; width: 236px; height: 122px; pointer-events: none; display: flex; flex-direction: column; align-items: center; z-index: 5; }
  .wm-ar { font: 700 74px/80px "DejaVu Sans", sans-serif; color: rgba(150,150,150,.32); direction: rtl; }
  .wm-en { font: 400 44px/42px "Liberation Sans", sans-serif; -webkit-text-stroke: .8px rgba(205,205,205,.75); color: rgba(205,205,205,.75); transform: scaleX(.8); }
  .wm-dot { position: absolute; width: 14px; height: 14px; border-radius: 50%; background: rgba(205,205,205,.75); top: 74px; }
  .d1 { left: 25px; }
  .d2 { left: 44px; }
</style>
